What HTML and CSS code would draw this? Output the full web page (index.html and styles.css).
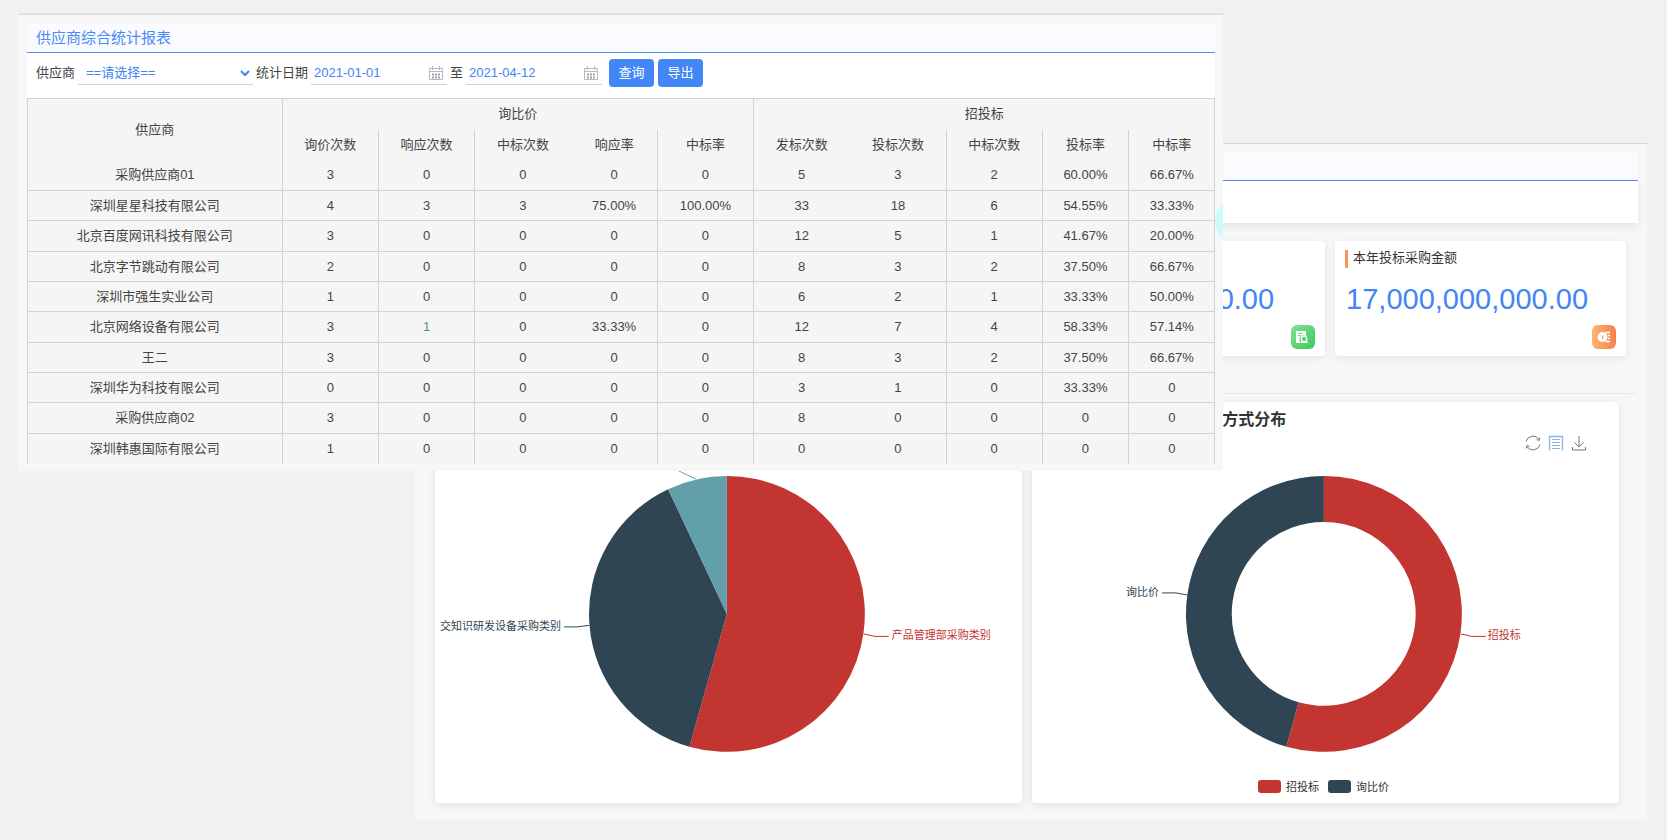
FILE: index.html
```html
<!DOCTYPE html>
<html lang="zh-CN">
<head>
<meta charset="utf-8">
<title>供应商综合统计报表</title>
<link rel="stylesheet" href="styles.css">
</head>
<body>
<main class="stage">
  <section class="window dashboard">
    <div class="title-bar"></div>
    <div class="toolbar-blank"></div>
    <div class="stats">
      <article class="stat stat-green">
        <p class="stat-value stat-value-end">0.00</p>
        <svg class="stat-icon" viewBox="0 0 24 24" aria-hidden="true">
          <defs><linearGradient id="gGreen" x1="0" y1="0" x2="1" y2="1"><stop offset="0" stop-color="#85e293"/><stop offset="1" stop-color="#36c95c"/></linearGradient></defs>
          <rect width="24" height="24" rx="6" fill="url(#gGreen)"/>
          <path d="M5 6h10v5a4 4 0 0 0-5 7H5z" fill="#fff"/>
          <path d="M7 8.500h5M7 10.500h3" stroke="#70d986"/>
          <circle cx="13" cy="14" r="2.800" fill="none" stroke="#fff" stroke-width="1.300"/>
          <path d="M15 16l1.500 1.500M10 17.500h7" stroke="#fff"/>
        </svg>
      </article>
      <article class="stat">
        <h2 class="stat-title">本年投标采购金额</h2>
        <p class="stat-value">17,000,000,000.00</p>
        <svg class="stat-icon" viewBox="0 0 24 24" aria-hidden="true">
          <defs><linearGradient id="gOrange" x1="0" y1="0" x2="1" y2="0"><stop offset="0" stop-color="#ffb56f"/><stop offset="1" stop-color="#f2814f"/></linearGradient></defs>
          <rect width="24" height="24" rx="6" fill="url(#gOrange)"/>
          <circle cx="10.500" cy="12" r="5" fill="#fff"/>
          <path d="M9 10.500l1.500 1.500 1.500-1.500M10.500 12v2" stroke="#f99c61" fill="none"/>
          <path d="M13.500 7.500h4.500M16 10.500h2M16 13.500h2M13.500 16.500h4.500" stroke="#fff" stroke-width="1.500"/>
        </svg>
      </article>
    </div>
    <div class="charts">
      <article class="chart">
        <svg class="plot" viewBox="0 0 587 401" role="img" aria-label="采购类别分布">
          <path d="M292 212V74A138 138 0 1 1 254.500 344.800Z" fill="#c23531"/>
          <path d="M292 212L254.500 344.800A138 138 0 0 1 233.200 87.200Z" fill="#2f4554"/>
          <path d="M292 212L233.200 87.200A138 138 0 0 1 292 74Z" fill="#61a0a8"/>
          <path d="M261 77Q254 74 240 67" class="lead lead-teal"/>
          <path d="M154 223.500L142 225H129" class="lead lead-navy"/>
          <path d="M429 232L440 234.500H454" class="lead lead-red"/>
          <text x="126" y="228" class="label label-navy label-end">交知识研发设备采购类别</text>
          <text x="457" y="237" class="label label-red">产品管理部采购类别</text>
        </svg>
      </article>
      <article class="chart">
        <h2 class="chart-title">方式分布</h2>
        <div class="tools">
          <button class="tool" aria-label="刷新"><svg viewBox="0 0 16 16"><path d="M1 6.500A7.200 7.200 0 0 1 14 4.500M15 9.500A7.200 7.200 0 0 1 2 11.500M14.800 2.500L14.300 5.300 11.500 4.700M1.200 13.500L1.700 10.700 4.500 11.300" fill="none" stroke="#777"/></svg></button>
          <button class="tool" aria-label="数据视图"><svg viewBox="0 0 16 16"><path d="M1.500 15.500V1.500h13v14" fill="none" stroke="#8fb4e2" stroke-width="1.300"/><path d="M4 4.500h8M4 7.500h8M4 10.500h8M4 13.500h8" fill="none" stroke="#8fb4e2"/></svg></button>
          <button class="tool" aria-label="下载"><svg viewBox="0 0 16 16"><path d="M8 1v11M3.500 7.500L8 12l4.500-4.500M1.500 12v3h13v-3" fill="none" stroke="#777"/></svg></button>
        </div>
        <svg class="plot" viewBox="0 0 587 401" role="img" aria-label="采购方式分布">
          <path d="M292 74A138 138 0 1 1 254.500 344.800L266.700 300.500A92 92 0 1 0 292 120Z" fill="#c23531"/>
          <path d="M254.500 344.800A138 138 0 0 1 292 74V120A92 92 0 0 0 266.700 300.500Z" fill="#2f4554"/>
          <path d="M155 193L144 191H130" class="lead lead-navy"/>
          <path d="M429 232L440 234.500H454" class="lead lead-red"/>
          <text x="127" y="194" class="label label-navy label-end">询比价</text>
          <text x="456" y="237" class="label label-red">招投标</text>
        </svg>
        <ul class="legend">
          <li class="legend-item legend-red">招投标</li>
          <li class="legend-item legend-navy">询比价</li>
        </ul>
      </article>
    </div>
  </section>

  <section class="window report">
    <header class="title-bar"><h1 class="title">供应商综合统计报表</h1></header>
    <form class="filters">
      <label for="supplier">供应商</label>
      <select id="supplier" class="field supplier"><option>==请选择==</option></select>
      <label for="from">统计日期</label>
      <span class="field date"><input id="from" type="text" value="2021-01-01"><svg viewBox="0 0 14 14" aria-hidden="true"><path d="M.5 2.500h13v11H.5zM.5 5.500h13M3.500 0v4M10.500 0v4" fill="none" stroke="#b5b8bf"/><path d="M3 8.500h8M3 11.500h8" stroke="#9da1ab" stroke-width="2" stroke-dasharray="2 1"/></svg></span>
      <label for="to">至</label>
      <span class="field date"><input id="to" type="text" value="2021-04-12"><svg viewBox="0 0 14 14" aria-hidden="true"><path d="M.5 2.500h13v11H.5zM.5 5.500h13M3.500 0v4M10.500 0v4" fill="none" stroke="#b5b8bf"/><path d="M3 8.500h8M3 11.500h8" stroke="#9da1ab" stroke-width="2" stroke-dasharray="2 1"/></svg></span>
      <div class="actions"><button type="button" class="btn">查询</button><button type="button" class="btn">导出</button></div>
    </form>
    <table class="grid">
      <colgroup><col class="c-name"><col class="c-wide"><col class="c-wide"><col class="c-wide"><col class="c-rate"><col class="c-wide"><col class="c-wide"><col class="c-wide"><col class="c-wide"><col class="c-rate"><col class="c-rate"></colgroup>
      <thead>
        <tr><th rowspan="2" class="line">供应商</th><th colspan="5" class="line">询比价</th><th colspan="5" class="line">招投标</th></tr>
        <tr><th>询价次数</th><th>响应次数</th><th>中标次数</th><th>响应率</th><th>中标率</th><th>发标次数</th><th>投标次数</th><th>中标次数</th><th>投标率</th><th>中标率</th></tr>
      </thead>
      <tbody>
        <tr><td>采购供应商01</td><td>3</td><td>0</td><td>0</td><td>0</td><td>0</td><td>5</td><td>3</td><td>2</td><td>60.00%</td><td>66.67%</td></tr>
        <tr><td>深圳星星科技有限公司</td><td>4</td><td>3</td><td>3</td><td>75.00%</td><td>100.00%</td><td>33</td><td>18</td><td>6</td><td>54.55%</td><td>33.33%</td></tr>
        <tr><td>北京百度网讯科技有限公司</td><td>3</td><td>0</td><td>0</td><td>0</td><td>0</td><td>12</td><td>5</td><td>1</td><td>41.67%</td><td>20.00%</td></tr>
        <tr><td>北京字节跳动有限公司</td><td>2</td><td>0</td><td>0</td><td>0</td><td>0</td><td>8</td><td>3</td><td>2</td><td>37.50%</td><td>66.67%</td></tr>
        <tr><td>深圳市强生实业公司</td><td>1</td><td>0</td><td>0</td><td>0</td><td>0</td><td>6</td><td>2</td><td>1</td><td>33.33%</td><td>50.00%</td></tr>
        <tr><td>北京网络设备有限公司</td><td>3</td><td class="linked">1</td><td>0</td><td>33.33%</td><td>0</td><td>12</td><td>7</td><td>4</td><td>58.33%</td><td>57.14%</td></tr>
        <tr><td>王二</td><td>3</td><td>0</td><td>0</td><td>0</td><td>0</td><td>8</td><td>3</td><td>2</td><td>37.50%</td><td>66.67%</td></tr>
        <tr><td>深圳华为科技有限公司</td><td>0</td><td>0</td><td>0</td><td>0</td><td>0</td><td>3</td><td>1</td><td>0</td><td>33.33%</td><td>0</td></tr>
        <tr><td>采购供应商02</td><td>3</td><td>0</td><td>0</td><td>0</td><td>0</td><td>8</td><td>0</td><td>0</td><td>0</td><td>0</td></tr>
        <tr><td>深圳韩惠国际有限公司</td><td>1</td><td>0</td><td>0</td><td>0</td><td>0</td><td>0</td><td>0</td><td>0</td><td>0</td><td>0</td></tr>
      </tbody>
    </table>
  </section>
</main>
</body>
</html>
```
FILE: styles.css
```css
* { box-sizing: border-box; }
body {
  margin: 0;
  background: #f1f1f1;
  color: #444;
  font: 13px/20px "Liberation Sans", "Noto Sans CJK SC", sans-serif;
}
h1, h2, p, ul { margin: 0; padding: 0; font-weight: normal; }
button, input, select { font: inherit; }

/* Two overlapping windows share one grid cell */
.stage { display: grid; align-items: start; padding: 13px 20px 20px 18px; }
.window { grid-area: 1 / 1; background: #f7f7f7; padding: 8px 8px 7px 9px; }
.dashboard { width: 75.600%; justify-self: end; margin-top: 130px; border-top: 1px solid #d6d6d6; padding-right: 9px; padding-bottom: 17px; }
.report { position: relative; width: 74%; border-top: 2px solid #e1e1e1; overflow: hidden; }
.report::after {
  content: "";
  position: absolute;
  left: calc(100% - 8px);
  top: 184px;
  width: 44px;
  height: 44px;
  border-radius: 50%;
  background: #cbfcf7;
}

.title-bar { height: 30px; background: #fafbff; border-bottom: 1px solid #4a8bf7; padding: 3px 9px; }
.dashboard .title-bar { height: 29px; }
.title { color: #4b8bf5; font-size: 15px; line-height: 24px; }

/* Report filters */
.filters { display: flex; align-items: center; gap: 3px; height: 45px; padding: 0 9px 5px; background: #fff; }
.field { height: 24px; border: 0; border-bottom: 1px solid #d2d2d2; background: transparent; color: #4285f4; }
.supplier { width: 175px; padding: 0 4px; }
.date { display: flex; align-items: center; width: 136px; padding: 0 4px 0 3px; }
.date input { flex: 1; min-width: 0; padding: 0; border: 0; background: transparent; color: #4285f4; }
.date svg { width: 14px; height: 14px; }
.actions { display: flex; gap: 4px; padding-left: 4px; }
.btn { width: 45px; height: 28px; padding: 0; border: 0; border-radius: 4px; background: #4387f7; color: #fff; }

/* Report table */
.grid { width: 100%; table-layout: fixed; border-collapse: collapse; background: #f5f5f5; }
.c-name { width: 254px; }
.c-wide { width: 96px; }
.c-rate { width: 86px; }
.grid th, .grid td { height: 30px; padding: 0; border: 1px solid #d2d2d2; text-align: center; font-weight: normal; }
.grid tbody tr:nth-child(3n) td, .grid thead th { height: 31px; }
.grid th:not(.line) { border-top: 0; }
.grid thead th, .grid thead tr { border-bottom: 0; }
.grid tbody tr:first-child td { border-top: 0; }
.grid tbody tr:last-child td { border-bottom: 0; }
.grid th:nth-child(3):not(.line), .grid td:nth-child(4), .grid td:nth-child(7), .grid th:nth-child(6) { border-right-color: transparent; }
.linked { color: #3f9a78; }

/* Dashboard */
.toolbar-blank { height: 42px; background: #fff; box-shadow: 0 4px 8px #00000012; }
.stats { display: grid; grid-template-columns: repeat(4, 1fr); gap: 10px; margin: 18px 0 0; padding: 0 12px 37px 8px; }
.stat { display: flex; flex-direction: column; grid-column: 4; height: 115px; padding: 9px 10px 7px; border-radius: 4px; background: #fff; box-shadow: 0 2px 8px #00000014; }
.stat-green { grid-column: 3; }
.stat-title { height: 18px; padding-left: 5px; border-left: 3px solid #f6955f; color: #333; font-size: 13px; line-height: 16px; }
.stat-value { padding: 13px 0 0 1px; color: #4285f4; font-size: 29px; line-height: 36px; }
.stat-value-end { padding: 31px 41px 0 0; text-align: right; }
.stat-icon { align-self: flex-end; width: 24px; height: 24px; margin-top: auto; }
.charts { display: grid; grid-template-columns: 1fr 1fr; gap: 10px; margin-right: 2px; border-top: 1px solid #e9e9e9; padding: 8px 17px 0 11px; }
.chart { display: grid; border-radius: 4px; background: #fff; box-shadow: 0 2px 10px #00000018; }
.chart > * { grid-area: 1 / 1; }
.plot { display: block; width: 100%; }
.chart-title { padding: 7px 0 0 190px; color: #333; font-size: 16px; line-height: 22px; font-weight: bold; }
.tools { display: flex; gap: 7px; justify-self: end; align-self: start; z-index: 1; padding: 33px 32px 0 0; }
.tool { width: 16px; height: 16px; padding: 0; border: 0; background: none; }
.tool svg { display: block; }
.lead { fill: none; stroke-width: 1; }
.lead-teal { stroke: #61a0a8; }
.lead-navy { stroke: #2f4554; }
.lead-red { stroke: #c23531; }
.label { font-size: 11px; }
.label-end { text-anchor: end; }
.label-navy { fill: #2f4554; }
.label-red { fill: #c23531; }
.legend { display: flex; gap: 9px; justify-self: center; align-self: end; list-style: none; font-size: 11px; line-height: 16px; padding: 0 4px 8px 0; }
.legend-item { display: flex; align-items: center; gap: 5px; color: #333; }
.legend-item::before { content: ""; width: 23px; height: 13px; border-radius: 3px; background: #c23531; }
.legend-navy::before { background: #2f4554; }
```
